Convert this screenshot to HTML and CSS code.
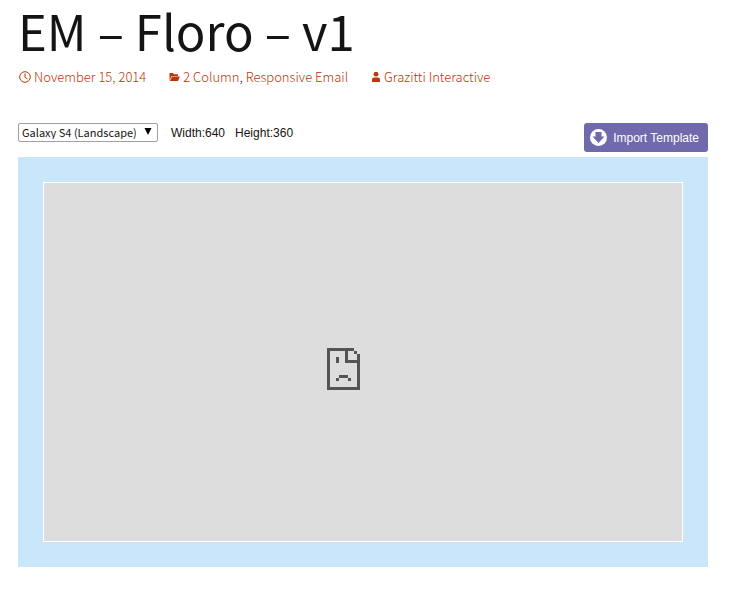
FILE: index.html
```html
<!DOCTYPE html>
<html lang="en">
<head>
    <meta charset="UTF-8">
    <meta name="viewport" content="width=device-width, initial-scale=1">
    <title>EM – Floro – v1</title>
    <link rel="stylesheet" href="styles.css">
</head>
<body>
    <header class="entry-header">
        <h1 class="entry-title">EM – Floro – v1</h1>
        <div class="entry-meta">
            <span class="meta-item">
                <svg class="icon" width="12" height="12" viewBox="0 0 12 12" fill="none" stroke="#bc360a">
                    <circle cx="6" cy="6" r="5.3"/>
                    <path d="M6 2.5V6.3L8.5 8"/>
                </svg>
                <a href="#">November 15, 2014</a>
            </span>
            <span class="meta-item">
                <svg class="icon" width="11" height="12" viewBox="0 0 11 12" fill="#bc360a">
                    <path d="M0.5 2H4L5 3.3H9V5H2.6L0.5 9.3Z"/>
                    <path d="M3.1 5.6H10.8L9 10H0.7Z"/>
                </svg>
                <span><a href="#">2 Column</a>, <a href="#">Responsive Email</a></span>
            </span>
            <span class="meta-item">
                <svg class="icon" width="10" height="12" viewBox="0 0 10 12" fill="#bc360a">
                    <circle cx="5" cy="3.2" r="2.4"/>
                    <path d="M1 11V8.6Q1 6.4 3.2 6.4H6.8Q9 6.4 9 8.6V11Z"/>
                </svg>
                <a href="#">Grazitti Interactive</a>
            </span>
        </div>
    </header>
    <main>
        <div class="toolbar">
            <div class="select-wrap">
                <select id="device" class="device-select" aria-label="Device">
                    <option>Galaxy S4 (Landscape)</option>
                </select>
                <svg class="select-arrow" width="8" height="7" viewBox="0 0 8 7"><path d="M0.5 0H7.5L4 7Z"/></svg>
            </div>
            <span class="size">Width:640</span>
            <span class="size">Height:360</span>
            <button type="button" class="import-btn">
                <svg width="17" height="17" viewBox="0 0 17 17">
                    <circle cx="8.5" cy="8.5" r="8.5" fill="#fff"/>
                    <path d="M5.5 3H11.5V7.5H14.5L8.5 14L2.5 7.5H5.5Z" fill="#6f6aab"/>
                </svg>
                Import Template
            </button>
        </div>
        <div class="preview">
            <div class="preview-frame">
                <svg width="33" height="42" viewBox="0 0 11 14" fill="#545454" shape-rendering="crispEdges">
                    <path d="M0 0H9V1H7V4H10V2H11V14H0ZM1 1V13H10V5H6V1Z" fill-rule="evenodd"/>
                    <path d="M9 1H10V2H9ZM3 3H4V5H3ZM4 9H7V10H4ZM3 10H4V11H3ZM7 10H8V11H7Z"/>
                </svg>
            </div>
        </div>
    </main>
</body>
</html>
```
FILE: styles.css
```css
body {
    font-family: "Noto Sans CJK SC", "Open Sans", sans-serif;
    margin: 0;
    padding: 0 31px 38px 18px;
    background-color: #fff;
    color: #141412;
}
.entry-title {
    margin: 0;
    font-size: 49px;
    font-weight: normal;
    line-height: 60px;
}
.entry-meta {
    display: flex;
    flex-wrap: wrap;
    gap: 0 22px;
    margin-top: 7px;
    font-size: 13px;
    font-weight: 300;
    line-height: 20px;
}
.meta-item {
    display: flex;
    align-items: center;
    gap: 3px;
}
.entry-meta a {
    color: #bc360a;
    text-decoration: none;
}
.entry-meta a:hover {
    text-decoration: underline;
}
.icon {
    margin-left: 1px;
}
.toolbar {
    display: flex;
    align-items: flex-start;
    margin-top: 36px;
    margin-bottom: 5px;
    font-family: "Liberation Sans", Arial, sans-serif;
    font-size: 12px;
    line-height: 20px;
}
.select-wrap {
    position: relative;
    margin-right: 13px;
}
.device-select {
    display: block;
    appearance: none;
    width: 140px;
    height: 19px;
    padding: 0 3px 2px;
    border: 1px solid #a0a0a0;
    border-radius: 2px;
    background-color: #fff;
    color: #141412;
    font-family: "Noto Sans CJK SC", "Open Sans", sans-serif;
    font-size: 11px;
}
.select-arrow {
    position: absolute;
    top: 5px;
    right: 6px;
    pointer-events: none;
}
.size {
    margin-right: 10px;
}
.import-btn {
    display: flex;
    align-items: center;
    gap: 6px;
    height: 29px;
    margin-left: auto;
    padding: 0 9px 0 6px;
    border: none;
    border-radius: 3px;
    background-color: #6f6aab;
    color: #fff;
    font-family: "Liberation Sans", Arial, sans-serif;
    font-size: 12px;
    cursor: pointer;
}
.preview {
    padding: 25px;
    background-color: #c9e6fb;
}
.preview-frame {
    display: flex;
    align-items: center;
    justify-content: center;
    box-sizing: border-box;
    height: 360px;
    padding: 14px 40px 0 0;
    border: 1px solid #fff;
    background-color: #ddd;
}
```
